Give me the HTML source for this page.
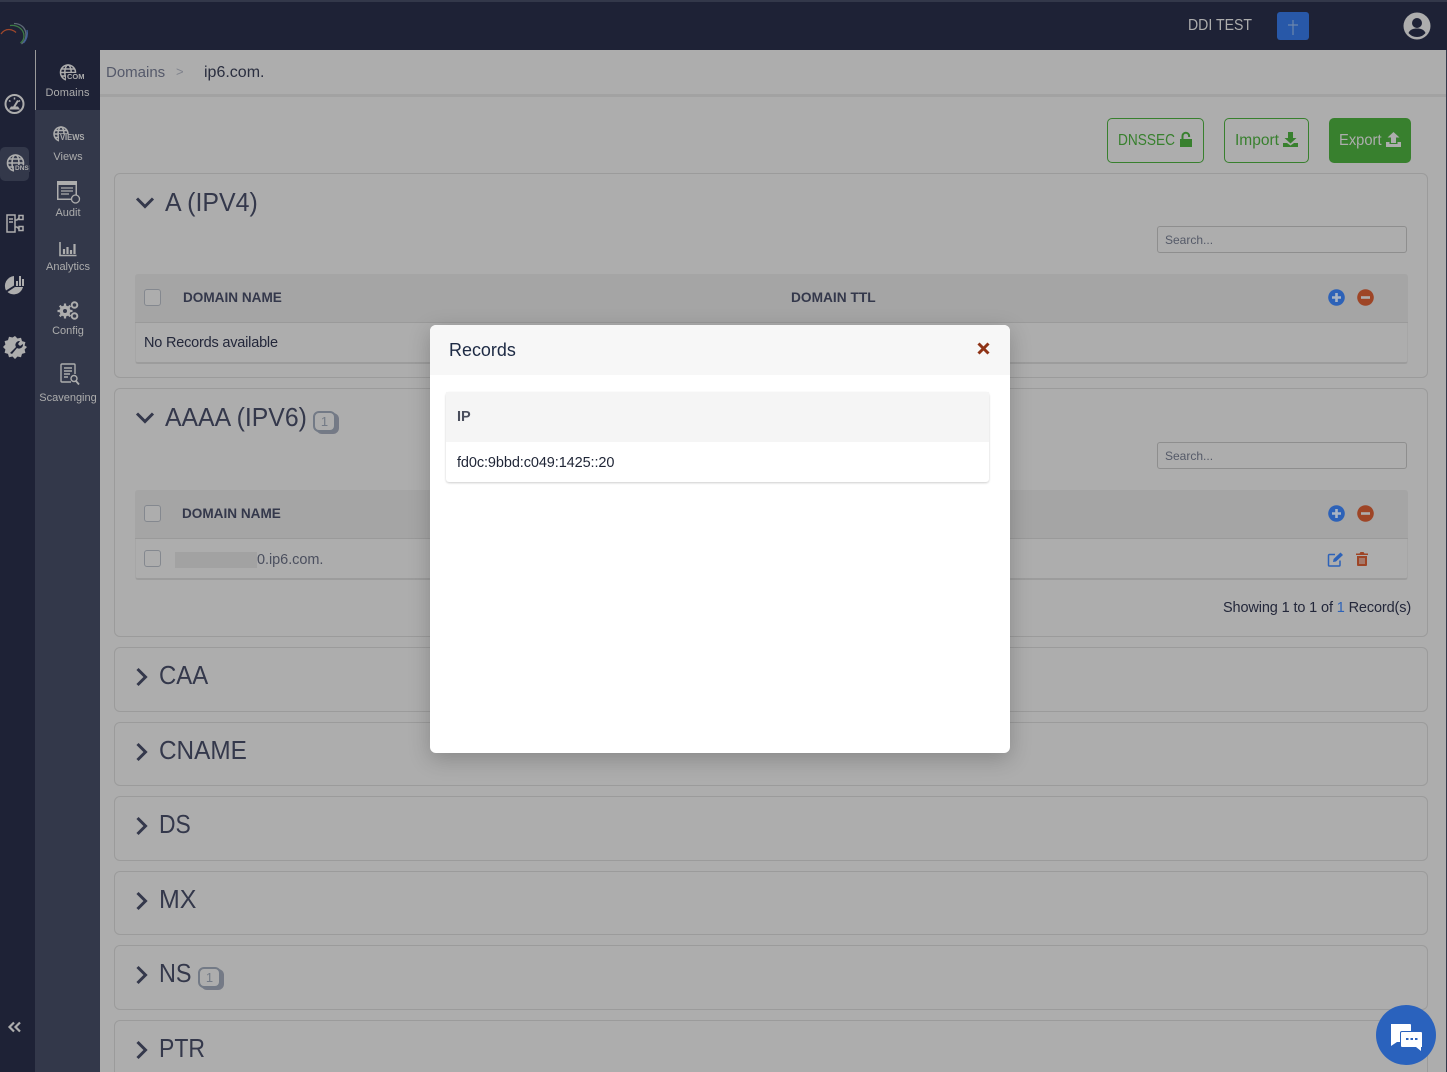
<!DOCTYPE html>
<html style="overflow:hidden"><head><meta charset="utf-8"><title>Records</title>
<style>
*{box-sizing:border-box}
html,body{margin:0;padding:0;width:1447px;height:1072px;overflow:hidden}
#wrap{position:relative;width:1447px;height:1072px;overflow:hidden;background:#adadad;font-family:"Liberation Sans",sans-serif;color:#2a2e3f}
.a{position:absolute;white-space:nowrap}
.card{position:absolute;left:114px;width:1314px;border:1px solid #9b9b9b;border-radius:6px;background:#adadad}
.h{position:absolute;font-size:26px;line-height:30px;color:#34384b;white-space:nowrap;transform-origin:left center}
.nav{position:absolute;left:35.500px;width:65px;text-align:center;font-size:11px;line-height:13px;color:#adadad;white-space:nowrap}
.th{position:absolute;left:135px;width:1273px;height:49px;background:#a5a5a5;border-bottom:1px solid #9a9a9a;border-radius:3px 3px 0 0}
.tr{position:absolute;left:135px;width:1273px;height:41px;background:#adadad;border-bottom:2px solid #9c9c9c;border-left:1px solid #a6a6a6;border-right:1px solid #a6a6a6;border-radius:0 0 3px 3px}
.cb{position:absolute;left:144px;width:17px;height:17px;border:1.5px solid #84888f;border-radius:3px;background:#adadad}
.bold{position:absolute;font-size:14px;font-weight:bold;color:#34384b;white-space:nowrap;transform-origin:left center}
.search{position:absolute;left:1157px;width:250px;height:27px;border:1px solid #8e8e8e;border-radius:3px;font-size:12px;line-height:26px;padding-left:7px;color:#555a68}
.btn{position:absolute;top:118px;height:45px;border:1px solid #38802e;border-radius:5px;color:#38802e;font-size:16px;line-height:43px;padding-left:10px;white-space:nowrap}
.btn span{display:inline-block;transform-origin:left center}
.badge{position:absolute;width:23px;height:21px;border:2px solid #737a86;border-radius:6px;box-shadow:3px 2px 0 #757a86;background:#adadad;font-size:13px;line-height:17px;text-align:center;color:#737a86}
svg{position:absolute;overflow:visible}
</style></head><body><div id="wrap">

<!-- top bar -->
<div class="a" style="left:0;top:0;width:1447px;height:50px;background:#1e2236;border-top:2px solid #33384a"></div>
<svg style="left:0;top:22px" width="30" height="26" viewBox="0 0 30 26" fill="none" stroke-width="1.300">
<path d="M14 1.500C21 1.500 26 6 26 13c0 4-2 7-4.500 9" stroke="#5f6b78"/>
<path d="M10 3.500C17 2.500 24 7 24 14c0 3-1.500 5.500-3.500 7" stroke="#3d7a45"/>
<path d="M1 12c2-3 5-4.500 8-4.500 4 0 7 3 7 3" stroke="#a0482c"/>
<path d="M27 8c.8 4 0 9-3.500 13" stroke="#3f5f9a"/>
</svg>
<div class="a" style="left:1188px;top:17px;font-size:15.500px;line-height:18px;color:#adadad;transform:scaleX(.91);transform-origin:left center">DDI TEST</div>
<div class="a" style="left:1277px;top:12px;width:32px;height:28px;background:#2858a8;border-radius:3px"></div>
<svg style="left:1285px;top:18px" width="16" height="18" viewBox="0 0 16 18"><path d="M8 2v15M3 7h10" stroke="#6c86ad" stroke-width="1.200"/></svg>
<svg style="left:1403px;top:12px" width="28" height="28" viewBox="0 0 28 28"><circle cx="14" cy="14" r="13.500" fill="#adadad"/><circle cx="14" cy="11" r="5" fill="#1e2236"/><path d="M5.500 21c1.500-3.500 4.500-4.500 8.500-4.500s7 1 8.500 4.500c-2 2.500-5 4-8.500 4s-6.500-1.500-8.500-4z" fill="#1e2236"/></svg>

<!-- rails -->
<div class="a" style="left:0;top:50px;width:35px;height:1022px;background:#1e2236"></div>
<div class="a" style="left:35px;top:50px;width:65px;height:1022px;background:#33384a"></div>
<div class="a" style="left:35px;top:50px;width:65px;height:60px;background:#1e2236;border-left:1px solid #9a9a9a"></div>
<div class="a" style="left:0;top:147px;width:29px;height:34px;background:#33384a;border-radius:5px"></div>

<!-- left rail icons -->
<svg style="left:4px;top:94px" width="21" height="20" viewBox="0 0 21 20"><circle cx="10.500" cy="10" r="9" fill="none" stroke="#adadad" stroke-width="2"/><path d="M5 6.500l1.500 1M16 6.500l-1.500 1M10.500 3.500v2" stroke="#adadad" stroke-width="1.500"/><path d="M5 15.500h11l-2-3H7z" fill="#adadad"/><path d="M10 13l4-6.500" stroke="#adadad" stroke-width="2"/></svg>
<svg style="left:6px;top:154px" width="22" height="19" viewBox="0 0 22 19" fill="none" stroke="#adadad" stroke-width="1.600"><circle cx="9.500" cy="9" r="8"/><ellipse cx="9.500" cy="9" rx="3.500" ry="8"/><path d="M1.500 9h16M2.500 5h14M2.500 13h14"/></svg>
<div class="a" style="left:14px;top:165px;font-size:6.500px;line-height:7px;font-weight:bold;color:#adadad;background:#33384a;padding:0 1px">DNS</div>
<svg style="left:6px;top:214px" width="18" height="19" viewBox="0 0 18 19" fill="none" stroke="#adadad" stroke-width="1.500"><rect x="1" y="1" width="8" height="17"/><path d="M3 5h4M3 8h4"/><rect x="13" y="1.500" width="4" height="4"/><rect x="13" y="12.500" width="4" height="4"/><path d="M9 6h2l2-2M9 13h2l2 2"/></svg>
<svg style="left:4px;top:275px" width="21" height="20" viewBox="0 0 21 20" fill="#adadad"><path d="M10 1v9.500l-8 5A10 10 0 0 1 10 1z"/><path d="M11 12H19A9.500 9.500 0 0 1 3.500 17z"/><rect x="12" y="6" width="2" height="5"/><rect x="15" y="1" width="2" height="10"/><rect x="18" y="4" width="2" height="7"/></svg>
<svg style="left:3px;top:335px" width="24" height="24" viewBox="0 0 24 24"><path fill="#adadad" d="M12 1l2.500 2.500 3.500-.8 1 3.400 3.400 1-.8 3.400L24 12l-2.400 2.500.8 3.400-3.400 1-1 3.400-3.500-.8L12 24l-2.500-2.500-3.500.8-1-3.400-3.400-1 .8-3.400L0 12l2.400-2.500-.8-3.400 3.400-1 1-3.400 3.500.8z"/><path d="M7 18l6-6a4 4 0 0 1 4-6l-2 3 2 2 3-2a4 4 0 0 1-6 4l-5 6z" fill="#1e2236"/></svg>
<svg style="left:8px;top:1021px" width="13" height="12" viewBox="0 0 13 12" fill="none" stroke="#adadad" stroke-width="2.200"><path d="M6 1.500L1.500 6 6 10.500M12 1.500L7.500 6 12 10.500"/></svg>

<!-- second rail -->
<svg style="left:59px;top:64px" width="18" height="17" viewBox="0 0 18 17" fill="none" stroke="#adadad" stroke-width="1.500"><circle cx="9" cy="8.500" r="7.500"/><ellipse cx="9" cy="8.500" rx="3.200" ry="7.500"/><path d="M1.500 8.500h15M2.500 5h13M2.500 12h13"/></svg>
<div class="a" style="left:66px;top:73px;font-size:7.500px;line-height:8px;font-weight:bold;color:#adadad;background:#1e2236;padding:0 1px">COM</div>
<div class="nav" style="top:87px;font-size:11px;left:35px;letter-spacing:.1px">Domains</div>
<svg style="left:53px;top:126px" width="16" height="16" viewBox="0 0 16 16" fill="none" stroke="#adadad" stroke-width="1.500"><circle cx="8" cy="8" r="7"/><ellipse cx="8" cy="8" rx="3" ry="7"/><path d="M1 8h14M2 4.500h12M2 11.500h12"/></svg>
<div class="a" style="left:59px;top:134px;font-size:8px;line-height:8px;font-weight:bold;color:#adadad;background:#33384a;padding:0 1px;transform:scaleX(.95);transform-origin:left center">VIEWS</div>
<div class="nav" style="top:151px">Views</div>
<svg style="left:57px;top:181px" width="24" height="23" viewBox="0 0 24 23"><rect x="0" y="0" width="20" height="19" fill="#adadad"/><rect x="1.500" y="4" width="17" height="13.500" fill="#33384a"/><path d="M4 7h12M4 10h12M4 13h8" stroke="#adadad" stroke-width="1.300"/><circle cx="18.500" cy="18" r="4" fill="#33384a" stroke="#adadad" stroke-width="1.300"/></svg>
<div class="nav" style="top:207px">Audit</div>
<svg style="left:59px;top:242px" width="18" height="15" viewBox="0 0 18 15" fill="none" stroke="#adadad"><path d="M1 0v13.500h16.500" stroke-width="1.600"/><path d="M5 12V7M8.500 12V5M12 12V8M15.500 12V2" stroke-width="2.200"/></svg>
<div class="nav" style="top:261px">Analytics</div>
<svg style="left:57px;top:301px" width="22" height="19" viewBox="0 0 22 19" fill="#adadad"><circle cx="8" cy="10" r="5.500"/><path d="M8 2.500v15M.5 10h15M2.700 4.700l10.600 10.600M13.300 4.700L2.700 15.300" stroke="#adadad" stroke-width="2.200"/><circle cx="8" cy="10" r="2" fill="#33384a"/><circle cx="17.500" cy="4" r="2.800" fill="none" stroke="#adadad" stroke-width="2"/><circle cx="17.500" cy="15" r="2.800" fill="none" stroke="#adadad" stroke-width="2"/></svg>
<div class="nav" style="top:325px">Config</div>
<svg style="left:60px;top:363px" width="20" height="23" viewBox="0 0 20 23" fill="none" stroke="#adadad" stroke-width="1.400"><path d="M11 19H2a1 1 0 0 1-1-1V2a1 1 0 0 1 1-1h12a1 1 0 0 1 1 1v9"/><path d="M4 5h8M4 8h8M4 11h6M4 14h4"/><circle cx="14" cy="15.500" r="3"/><path d="M16 18l3 3.500" stroke-width="1.800"/></svg>
<div class="nav" style="top:392px">Scavenging</div>

<!-- breadcrumb -->
<div class="a" style="left:100px;top:50px;width:1347px;height:47px;background:#adadad;border-bottom:3px solid #a2a2a2"></div>
<div class="a" style="left:106px;top:64px;font-size:15px;line-height:18px;color:#55596a">Domains</div>
<div class="a" style="left:176px;top:63px;font-size:13px;line-height:18px;color:#7f828c">&gt;</div>
<div class="a" style="left:204px;top:64px;font-size:16px;line-height:18px;color:#2a2e3f">ip6.com.</div>

<!-- right edge -->
<div class="a" style="left:1446px;top:50px;width:1px;height:1022px;background:#33384a"></div>

<!-- buttons -->
<div class="btn" style="left:1107px;width:97px"><span style="transform:scaleX(.855)">DNSSEC</span></div>
<svg style="left:1179px;top:132px" width="14" height="16" viewBox="0 0 14 16" fill="#38802e"><path d="M1 7h12v8H1z"/><path d="M3.500 7V4a3.300 3.300 0 0 1 6.600 0v1" fill="none" stroke="#38802e" stroke-width="2"/></svg>
<div class="btn" style="left:1224px;width:85px"><span style="transform:scaleX(.97)">Import</span></div>
<svg style="left:1283px;top:132px" width="15" height="15" viewBox="0 0 15 15" fill="#38802e"><path d="M5 0h5v6h3.500l-6 5.500-6-5.500H5z"/><path d="M0 11h4l3.500 2.500L11 11h4v4H0z"/></svg>
<div class="btn" style="left:1329px;width:82px;background:#38802e;color:#adadad;padding-left:9px"><span style="transform:scaleX(.92)">Export</span></div>
<svg style="left:1386px;top:132px" width="15" height="15" viewBox="0 0 15 15" fill="#adadad"><path d="M5 11V5.500H1.500l6-5.500 6 5.500H10V11z"/><path d="M0 10h3.500v2h8v-2H15v5H0z"/></svg>

<!-- A card -->
<div class="card" style="top:173px;height:205px"></div>
<svg style="left:135px;top:196px" width="20" height="14" viewBox="0 0 20 14" fill="none" stroke="#34384b" stroke-width="3"><path d="M2 2.500l8 8 8-8"/></svg>
<div class="h" style="left:165px;top:187px;transform:scaleX(.958)">A (IPV4)</div>
<div class="search" style="top:226px">Search...</div>
<div class="th" style="top:274px"></div>
<div class="cb" style="top:289px"></div>
<div class="bold" style="left:183px;top:289px;transform:scaleX(.97)">DOMAIN NAME</div>
<div class="bold" style="left:791px;top:289px;transform:scaleX(.98)">DOMAIN TTL</div>
<svg style="left:1328px;top:289px" width="17" height="17" viewBox="0 0 17 17"><circle cx="8.500" cy="8.500" r="8.300" fill="#2d62b8"/><path d="M8.500 4v9M4 8.500h9" stroke="#a9b4c4" stroke-width="2.600"/></svg>
<svg style="left:1357px;top:289px" width="17" height="17" viewBox="0 0 17 17"><circle cx="8.500" cy="8.500" r="8.300" fill="#9e4526"/><path d="M4 8.500h9" stroke="#adadad" stroke-width="2.600"/></svg>
<div class="tr" style="top:323px"></div>
<div class="a" style="left:144px;top:334px;font-size:14.500px;line-height:18px;color:#23273a;letter-spacing:-.2px">No Records available</div>

<!-- AAAA card -->
<div class="card" style="top:388px;height:249px"></div>
<svg style="left:135px;top:411px" width="20" height="14" viewBox="0 0 20 14" fill="none" stroke="#34384b" stroke-width="3"><path d="M2 2.500l8 8 8-8"/></svg>
<div class="h" style="left:165px;top:402px;transform:scaleX(.953)">AAAA (IPV6)</div>
<div class="badge" style="left:313px;top:411px">1</div>
<div class="search" style="top:442px">Search...</div>
<div class="th" style="top:490px"></div>
<div class="cb" style="top:505px"></div>
<div class="bold" style="left:182px;top:505px;transform:scaleX(.97)">DOMAIN NAME</div>
<svg style="left:1328px;top:505px" width="17" height="17" viewBox="0 0 17 17"><circle cx="8.500" cy="8.500" r="8.300" fill="#2d62b8"/><path d="M8.500 4v9M4 8.500h9" stroke="#a9b4c4" stroke-width="2.600"/></svg>
<svg style="left:1357px;top:505px" width="17" height="17" viewBox="0 0 17 17"><circle cx="8.500" cy="8.500" r="8.300" fill="#9e4526"/><path d="M4 8.500h9" stroke="#adadad" stroke-width="2.600"/></svg>
<div class="tr" style="top:539px"></div>
<div class="cb" style="top:550px"></div>
<div class="a" style="left:175px;top:552px;width:82px;height:16px;background:#a2a2a2"></div>
<div class="a" style="left:257px;top:551px;font-size:14.500px;line-height:18px;color:#4b4f5e;letter-spacing:-.05px">0.ip6.com.</div>
<svg style="left:1328px;top:552px" width="16" height="15" viewBox="0 0 16 15" fill="none"><path d="M12 8.500V13a1 1 0 0 1-1 1H1.500a1 1 0 0 1-1-1V3.500a1 1 0 0 1 1-1H7" stroke="#2d62b8" stroke-width="1.500"/><path d="M5 10l.6-3L12.500.5l2.500 2.500L8 9.500z" fill="#2d62b8"/></svg>
<svg style="left:1356px;top:552px" width="12" height="14" viewBox="0 0 12 14" fill="#9e4526"><path d="M0 1.500h3.500L4.500 0h3l1 1.500H12V3H0z"/><path fill-rule="evenodd" d="M1 4h10v9a1 1 0 0 1-1 1H2a1 1 0 0 1-1-1zM3.500 6v6h1V6zM5.500 6v6h1V6zM7.500 6v6h1V6z"/></svg>
<div class="a" style="left:1223px;top:599px;font-size:14.500px;line-height:18px;color:#23273a;letter-spacing:-.13px">Showing 1 to 1 of <span style="color:#2d62b8">1</span> Record(s)</div>

<!-- collapsed cards -->
<div class="card" style="top:647px;height:65px"></div>
<div class="card" style="top:722px;height:64px"></div>
<div class="card" style="top:796px;height:65px"></div>
<div class="card" style="top:871px;height:64px"></div>
<div class="card" style="top:945px;height:65px"></div>
<div class="card" style="top:1020px;height:70px"></div>

<svg style="left:135px;top:667px" width="14" height="20" viewBox="0 0 14 20" fill="none" stroke="#34384b" stroke-width="3"><path d="M2.500 2l8 8-8 8"/></svg>
<div class="h" style="left:159px;top:660px;transform:scaleX(.92)">CAA</div>
<svg style="left:135px;top:742px" width="14" height="20" viewBox="0 0 14 20" fill="none" stroke="#34384b" stroke-width="3"><path d="M2.500 2l8 8-8 8"/></svg>
<div class="h" style="left:159px;top:735px;transform:scaleX(.935)">CNAME</div>
<svg style="left:135px;top:816px" width="14" height="20" viewBox="0 0 14 20" fill="none" stroke="#34384b" stroke-width="3"><path d="M2.500 2l8 8-8 8"/></svg>
<div class="h" style="left:159px;top:809px;transform:scaleX(.88)">DS</div>
<svg style="left:135px;top:891px" width="14" height="20" viewBox="0 0 14 20" fill="none" stroke="#34384b" stroke-width="3"><path d="M2.500 2l8 8-8 8"/></svg>
<div class="h" style="left:159px;top:884px;transform:scaleX(.96)">MX</div>
<svg style="left:135px;top:965px" width="14" height="20" viewBox="0 0 14 20" fill="none" stroke="#34384b" stroke-width="3"><path d="M2.500 2l8 8-8 8"/></svg>
<div class="h" style="left:159px;top:958px;transform:scaleX(.9)">NS</div>
<div class="badge" style="left:198px;top:967px">1</div>
<svg style="left:135px;top:1040px" width="14" height="20" viewBox="0 0 14 20" fill="none" stroke="#34384b" stroke-width="3"><path d="M2.500 2l8 8-8 8"/></svg>
<div class="h" style="left:159px;top:1033px;transform:scaleX(.885)">PTR</div>

<!-- modal -->
<div class="a" style="left:430px;top:325px;width:580px;height:428px;background:#fff;border-radius:6px;box-shadow:0 6px 22px rgba(0,0,0,.22)"></div>
<div class="a" style="left:430px;top:325px;width:580px;height:50px;background:#f7f7f7;border-radius:6px 6px 0 0"></div>
<div class="a" style="left:449px;top:338px;font-size:18.500px;line-height:24px;color:#1d2a44;transform:scaleX(.97);transform-origin:left center">Records</div>
<svg style="left:977px;top:342px" width="13" height="13" viewBox="0 0 13 13" fill="none" stroke="#8f3417" stroke-width="3"><path d="M1.500 1.500l10 10M11.500 1.500l-10 10"/></svg>
<div class="a" style="left:446px;top:392px;width:543px;height:90px;background:#fff;border-radius:3px;box-shadow:0 1px 2px rgba(0,0,0,.2)"></div>
<div class="a" style="left:446px;top:392px;width:543px;height:50px;background:#f5f5f5"></div>
<div class="a" style="left:457px;top:408px;font-size:14.500px;line-height:18px;font-weight:bold;color:#4a4e5c">IP</div>
<div class="a" style="left:457px;top:454px;font-size:14.500px;line-height:18px;color:#1f2536;letter-spacing:-.1px">fd0c:9bbd:c049:1425::20</div>

<!-- chat -->
<div class="a" style="left:1376px;top:1005px;width:60px;height:60px;background:#2a62bd;border-radius:50%"></div>
<svg style="left:1390px;top:1024px" width="32" height="28" viewBox="0 0 32 28"><path d="M1 0h19a1 1 0 0 1 1 1v6H12a2 2 0 0 0-2 2v9H7l-6 4z" fill="#fff"/><path d="M12 8h19a1 1 0 0 1 1 1v14h-1v4l-5-4H12a1 1 0 0 1-1-1V9a1 1 0 0 1 1-1z" fill="#fff"/><path d="M16 15h2.500M20.500 15H23M25 15h2.500" stroke="#2a62bd" stroke-width="2"/></svg>
</div></body></html>
